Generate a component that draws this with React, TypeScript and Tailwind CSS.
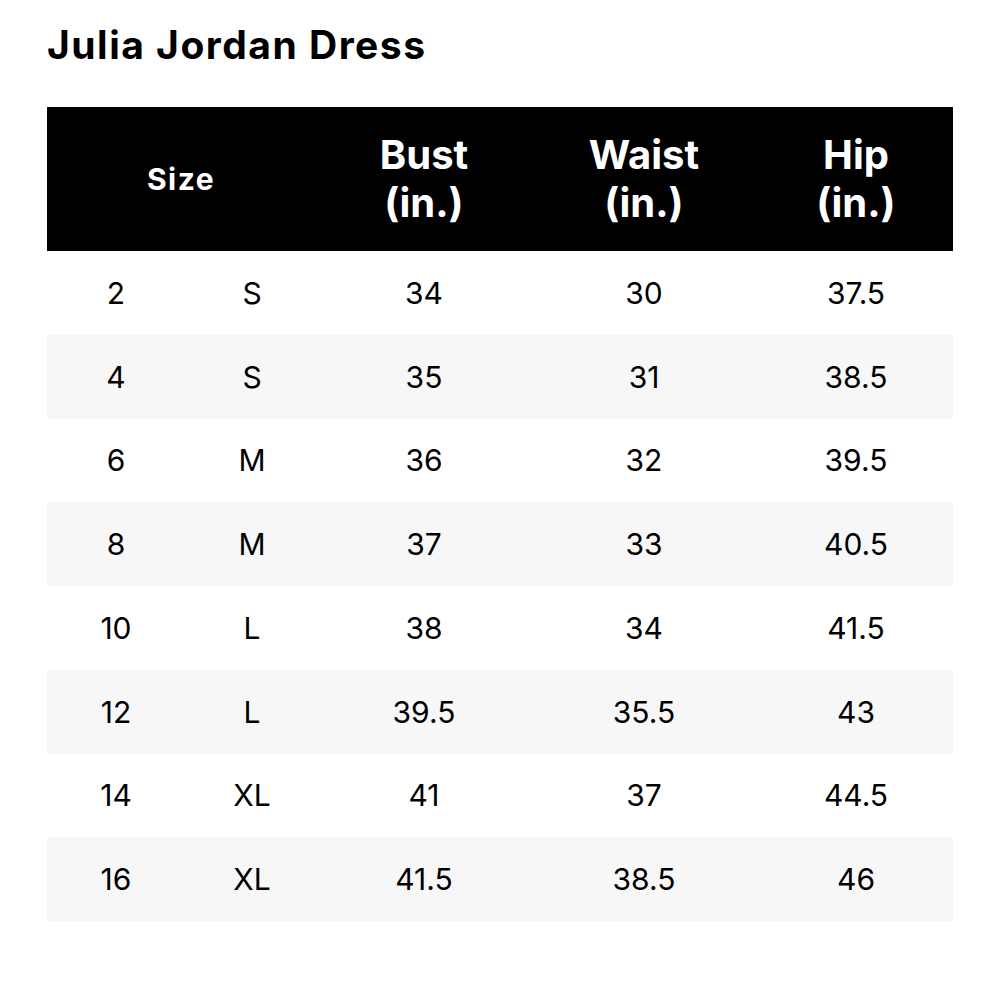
import React from "react";

const rows: [string, string, string, string, string][] = [
  ["2", "S", "34", "30", "37.5"],
  ["4", "S", "35", "31", "38.5"],
  ["6", "M", "36", "32", "39.5"],
  ["8", "M", "37", "33", "40.5"],
  ["10", "L", "38", "34", "41.5"],
  ["12", "L", "39.5", "35.5", "43"],
  ["14", "XL", "41", "37", "44.5"],
  ["16", "XL", "41.5", "38.5", "46"],
];

export default function App() {
  return (
    <div
      className="w-[1000px] h-[1000px] bg-white text-black px-[47px] pt-[25px]"
      style={{ fontFamily: 'Inter, "Liberation Sans", Arial, sans-serif' }}
    >
      <h1 className="text-[39px] leading-none font-bold h-[82px] tracking-[1.5px]">Julia Jordan Dress</h1>
      <div className="w-[906px]">
        <div className="grid grid-cols-[138px_134px_210px_230px_194px] bg-black text-white font-bold h-[144px] items-center text-center">
          <div className="col-span-2 text-[30px] leading-none tracking-[1.5px] pr-[4px]">Size</div>
          <div className="text-[40px] leading-[48px]">Bust<br />(in.)</div>
          <div className="text-[40px] leading-[48px]">Waist<br />(in.)</div>
          <div className="text-[40px] leading-[48px]">Hip<br />(in.)</div>
        </div>
        {rows.map((r, i) => (
          <div
            key={i}
            className={`grid grid-cols-[138px_134px_210px_230px_194px] h-[83.75px] items-center text-center text-[30px] leading-none ${i % 2 === 1 ? "bg-[#f7f7f7]" : "bg-white"}`}
          >
            {r.map((c, j) => (
              <div key={j}>{c}</div>
            ))}
          </div>
        ))}
      </div>
    </div>
  );
}
